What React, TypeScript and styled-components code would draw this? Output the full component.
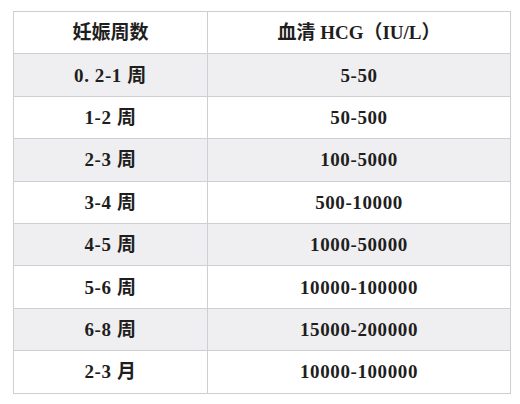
import * as React from 'react';
import styled, { createGlobalStyle } from 'styled-components';

const GlobalStyle = createGlobalStyle`
    html, body {
        margin: 0;
        padding: 0;
        background: #ffffff;
    }
`;

const Page = styled.div`
    padding: 11px 0 0 13px;
    font-family: 'Liberation Serif', 'Noto Sans CJK SC', serif;
`;

const Table = styled.table`
    border-collapse: collapse;
    width: 497px;
    table-layout: fixed;
    border: 1px solid #c9c8cc;
`;

interface IRow {
    shaded: boolean;
}

const Row = styled.tr`
    height: 42.4px;
    background: ${(props: IRow) => (props.shaded ? '#efeef0' : '#ffffff')};
`;

const Cell = styled.td`
    border: 1px solid #cfcfd3;
    padding: 0;
    text-align: center;
    vertical-align: middle;
    font-size: 19px;
    font-weight: 700;
    letter-spacing: 0.6px;
    color: #1e1e1e;
    line-height: 1;
`;

const HeadCell = styled(Cell)`
    letter-spacing: 0;
`;

const rows = [
    { week: '0. 2-1 周', value: '5-50' },
    { week: '1-2 周', value: '50-500' },
    { week: '2-3 周', value: '100-5000' },
    { week: '3-4 周', value: '500-10000' },
    { week: '4-5 周', value: '1000-50000' },
    { week: '5-6 周', value: '10000-100000' },
    { week: '6-8 周', value: '15000-200000' },
    { week: '2-3 月', value: '10000-100000' },
];

const App: React.FC = (): JSX.Element => {
    return (
        <Page>
            <GlobalStyle />
            <Table>
                <colgroup>
                    <col style={{ width: 194 }} />
                    <col style={{ width: 303 }} />
                </colgroup>
                <tbody>
                    <Row shaded={false}>
                        <HeadCell>妊娠周数</HeadCell>
                        <HeadCell>血清 HCG（IU/L）</HeadCell>
                    </Row>
                    {rows.map((row, i) => {
                        return (
                            <Row key={row.week} shaded={i % 2 === 0}>
                                <Cell>{row.week}</Cell>
                                <Cell>{row.value}</Cell>
                            </Row>
                        );
                    })}
                </tbody>
            </Table>
        </Page>
    );
};

export default App;
